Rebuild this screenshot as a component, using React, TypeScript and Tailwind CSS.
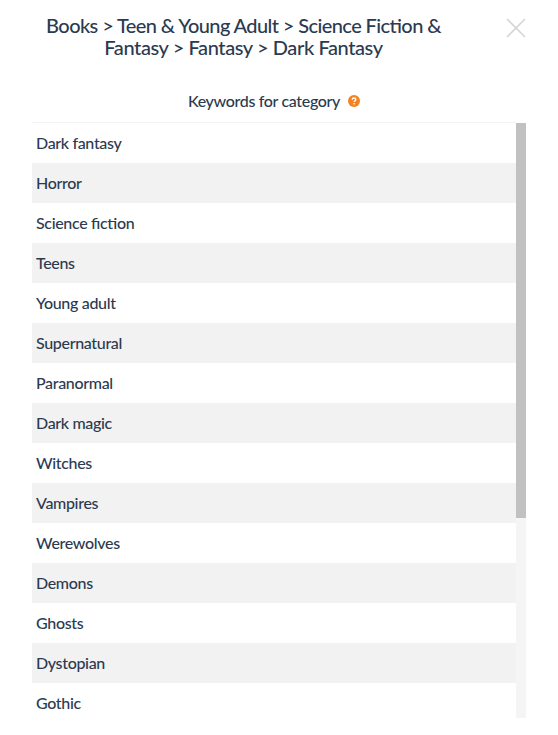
const rows = ["Dark fantasy","Horror","Science fiction","Teens","Young adult","Supernatural","Paranormal","Dark magic","Witches","Vampires","Werewolves","Demons","Ghosts","Dystopian","Gothic"];

export default function App() {
  return (
    <div className="h-[735px] w-[558px] overflow-hidden bg-white pl-[32px] pr-[32px] font-['Lato','Liberation_Sans',sans-serif] text-[#2c3a50] [font-feature-settings:'liga']">
      <div className="flex items-start">
        <h1 className="mt-[14px] w-[423px] text-center text-[20px] leading-[22px] font-medium">
          <span className="block tracking-[-0.6px]">Books &gt; Teen &amp; Young Adult &gt; Science Fiction &amp;</span>
          <span className="block tracking-[-0.4px]">Fantasy &gt; Fantasy &gt; Dark Fantasy</span>
        </h1>
        <svg className="mt-[18px] ml-[51px] h-[20px] w-[20px] shrink-0" viewBox="0 0 20 20" fill="none" stroke="#d6d6d6" strokeWidth="1.6">
          <path d="M1 1 19 19M19 1 1 19" />
        </svg>
      </div>
      <div className="mt-[32px] flex h-[22px] w-[484px] items-center justify-center gap-[8px] text-[16px] font-medium tracking-[-0.33px]">
        <span>Keywords for category</span>
        <svg className="h-[12px] w-[12px]" viewBox="0 0 12 12">
          <circle cx="6" cy="6" r="6" fill="#f58220" />
          <path d="M4.2 4.6C4.3 3.6 5 3 6 3s1.8.6 1.8 1.5c0 .8-.5 1.1-1 1.5-.4.3-.7.5-.7 1" fill="none" stroke="#fff" strokeWidth="1.4" />
          <rect x="5.3" y="8" width="1.5" height="1.4" fill="#fff" />
        </svg>
      </div>
      <div className="mt-[10px] h-px w-[484px] bg-[#f3f3f3]" />
      <div className="flex h-[595px] w-[494px]">
        <ul className="h-full w-[484px] overflow-hidden">
          {rows.map((r, i) => (
            <li key={r} className={`flex h-[40px] items-center pl-[4px] text-[16px] font-medium tracking-[-0.33px] ${i % 2 ? "bg-[#f2f2f2]" : "bg-white"}`}>
              {r}
            </li>
          ))}
        </ul>
        <div className="h-full w-[10px] bg-[#f5f5f5]">
          <div className="h-[395px] w-full bg-[#c1c1c1]" />
        </div>
      </div>
    </div>
  );
}
